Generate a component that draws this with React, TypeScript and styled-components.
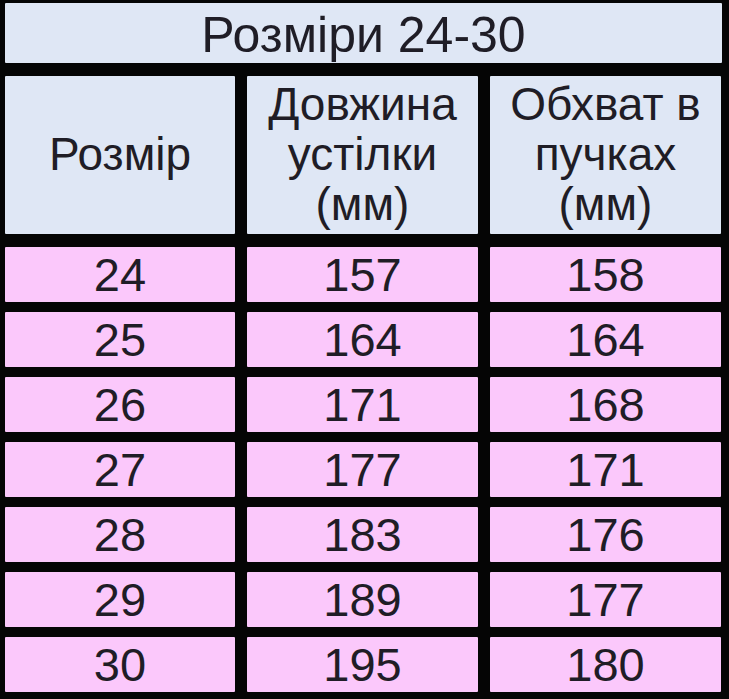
import React from 'react'
import styled, { createGlobalStyle } from 'styled-components'

const GlobalStyle = createGlobalStyle`
  html, body {
    margin: 0;
    padding: 0;
    background: #050505;
  }
  body {
    font-family: "Liberation Sans", Arial, sans-serif;
  }
`

const Page = styled.div`
  width: 729px;
  height: 699px;
  box-sizing: border-box;
  padding: 3px 7px 7px 5px;
  display: flex;
  flex-direction: column;
  gap: 13px;
  background: #050505;
`

const Cell = styled.div<{ $tone: 'head' | 'body' }>`
  display: flex;
  align-items: center;
  justify-content: center;
  text-align: center;
  color: #1f1d26;
  background: ${(p) => (p.$tone === 'head' ? '#dfe7f5' : '#fbc8fb')};
  border-radius: 1px;
`

const TitleCell = styled(Cell)`
  height: 60px;
  font-size: 50px;
  line-height: 60px;
  padding-top: 3px;
  box-sizing: border-box;
`

const HeaderRow = styled.div`
  display: grid;
  grid-template-columns: 230px 231px 231px;
  column-gap: 12px;
  height: 158px;
`

const HeaderCell = styled(Cell)`
  font-size: 46px;
  line-height: 50px;
  padding-bottom: 2px;
`

const Body = styled.div`
  display: grid;
  grid-template-columns: 230px 231px 231px;
  column-gap: 12px;
  row-gap: 10px;
  grid-auto-rows: 55px;
`

const ValueCell = styled(Cell)`
  font-size: 47px;
  line-height: 55px;
`

const rows: [string, string, string][] = [
  ['24', '157', '158'],
  ['25', '164', '164'],
  ['26', '171', '168'],
  ['27', '177', '171'],
  ['28', '183', '176'],
  ['29', '189', '177'],
  ['30', '195', '180'],
]

export default function App() {
  return (
    <>
      <GlobalStyle />
      <Page>
        <TitleCell $tone="head">Розміри 24-30</TitleCell>
        <HeaderRow>
          <HeaderCell $tone="head">Розмір</HeaderCell>
          <HeaderCell $tone="head">
            Довжина
            <br />
            устілки
            <br />
            (мм)
          </HeaderCell>
          <HeaderCell $tone="head">
            Обхват в
            <br />
            пучках
            <br />
            (мм)
          </HeaderCell>
        </HeaderRow>
        <Body>
          {rows.map((r) =>
            r.map((v, i) => (
              <ValueCell key={r[0] + '-' + i} $tone="body">
                {v}
              </ValueCell>
            ))
          )}
        </Body>
      </Page>
    </>
  )
}
